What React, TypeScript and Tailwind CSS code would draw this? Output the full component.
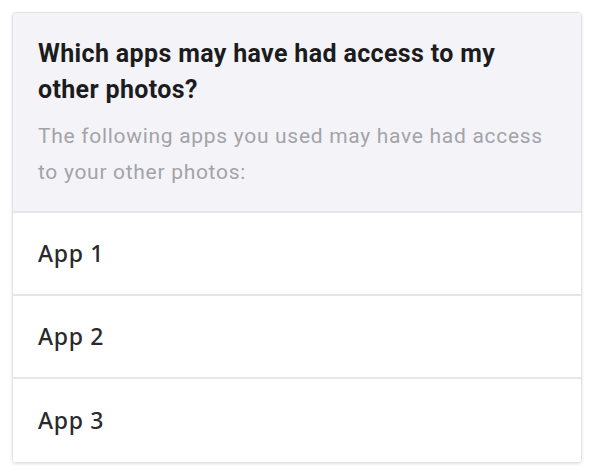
import React from "react";

const apps = ["App 1", "App 2", "App 3"];

const App = () => {
  return (
    <div className="w-[590px] h-[472px] bg-white pt-[12px] pl-[12px]">
      {/* Card */}
      <div className="w-[570px] rounded-[4px] border border-[#e3e3e6] shadow-[0_1px_3px_rgba(0,0,0,0.12)] overflow-hidden">
        {/* Header */}
        <div className="bg-[#f4f4f8] px-[25px] pt-[23px] pb-[21px] border-b-2 border-[#e6e6e9]">
          <h2 className="font-['Roboto',sans-serif] font-bold text-[25px] tracking-[0.35px] leading-[36px] text-[#1c1c1e]">
            Which apps may have had access to my other photos?
          </h2>
          <p className="mt-[10px] font-['Roboto',sans-serif] text-[21px] tracking-[0.7px] leading-[36px] text-[#a3a3a8]">
            The following apps you used may have had access to your other photos:
          </p>
        </div>

        {/* App list */}
        {apps.map((name, i) => (
          <div
            key={name}
            className={`h-[83px] flex items-center px-[25px] bg-white ${
              i < apps.length - 1 ? "border-b-2 border-[#e6e6e9]" : ""
            }`}
          >
            <span className="font-['Noto_Sans','Open_Sans',sans-serif] font-medium text-[23px] tracking-[0.7px] text-[#2a2a2c]">{name}</span>
          </div>
        ))}
      </div>
    </div>
  );
};

export default App;
